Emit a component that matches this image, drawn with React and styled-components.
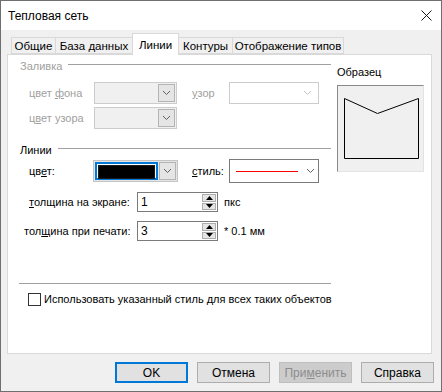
import React, { useState } from 'react';
import styled, { createGlobalStyle } from 'styled-components';

const GlobalStyle = createGlobalStyle`
  html, body { margin: 0; padding: 0; background: #ffffff; }
  * { box-sizing: border-box; }
`;

const Window = styled.div`
  width: 442px;
  height: 392px;
  border: 1px solid #6f6f6f;
  display: flex;
  flex-direction: column;
  background: #f0f0f0;
  font-family: "Liberation Sans", Arial, sans-serif;
  color: #000;
`;

const TitleBar = styled.div`
  height: 29px;
  background: #ffffff;
  display: flex;
  align-items: center;
  justify-content: space-between;
  padding: 0 9px 0 7px;
  font-size: 12px;
`;

const TabStrip = styled.div`
  height: 24px;
  display: flex;
  align-items: flex-end;
  padding-left: 10px;
  position: relative;
  z-index: 1;
`;

const Tab = styled.div`
  width: ${p => p.$w}px;
  height: ${p => (p.$active ? 22 : 17)}px;
  margin-left: -1px;
  margin-bottom: ${p => (p.$active ? -1 : 0)}px;
  border: 1px solid #d9d9d9;
  border-bottom: ${p => (p.$active ? 'none' : '1px solid #d9d9d9')};
  background: ${p => (p.$active ? '#ffffff' : '#f0f0f0')};
  font-size: 11.5px;
  white-space: nowrap;
  display: flex;
  align-items: center;
  justify-content: center;
  padding-top: ${p => (p.$active ? 0 : 1)}px;
  z-index: ${p => (p.$active ? 2 : 0)};
  cursor: default;
  &:first-child { margin-left: 0; }
`;

const Panel = styled.div`
  height: 300px;
  margin: 0 9px 0 6px;
  border: 1px solid #d9d9d9;
  background: #ffffff;
  padding: 4px 0 0 12px;
  display: grid;
  grid-template-columns: 311px 86px;
  column-gap: 6px;
  align-items: start;
  font-size: 11px;
`;

const LeftCol = styled.div`
  display: flex;
  flex-direction: column;
`;

const GroupHeader = styled.div`
  height: 14px;
  margin-top: ${p => p.$mt || 0}px;
  display: flex;
  align-items: center;
  gap: 6px;
  color: ${p => (p.$disabled ? '#a0a0a0' : '#000')};
  font-size: 11px;
  &::after {
    content: '';
    flex: 1;
    height: 1px;
    margin-top: -3px;
    background: #a0a0a0;
  }
`;

const FieldRow = styled.div`
  display: flex;
  align-items: center;
  height: ${p => p.$h || 22}px;
  margin-top: ${p => p.$mt || 0}px;
  padding-left: ${p => p.$pl ?? 9}px;
`;

const Label = styled.span`
  width: ${p => p.$w}px;
  flex: none;
  color: ${p => (p.$disabled ? '#a0a0a0' : '#000')};
  white-space: nowrap;
  u { text-decoration: underline; text-underline-offset: 1px; }
`;

const Spacer = styled.span`
  width: ${p => p.$w}px;
  flex: none;
`;

const Combo = styled.div`
  width: ${p => p.$w}px;
  height: ${p => p.$h || 22}px;
  flex: none;
  display: flex;
  border: 1px solid ${p => p.$border || '#cccccc'};
  background: ${p => p.$bg || '#f0f0f0'};
  padding: 1px;
`;

const ComboValue = styled.div`
  flex: 1;
  display: flex;
  align-items: center;
  padding: 0 5px;
`;

const Swatch = styled.div`
  flex: 1;
  border: 2px solid #0078d7;
  padding: 1px;
  background: #ffffff;
  margin-right: 1px;
  &::before {
    content: '';
    display: block;
    height: 100%;
    background: #000000;
    border: 1px solid #1a1a1a;
  }
`;

const DropButton = styled.div`
  width: ${p => (p.$plain ? 20 : 17)}px;
  display: flex;
  align-items: center;
  justify-content: center;
  background: ${p => (p.$plain ? 'transparent' : '#e5e5e5')};
  border: ${p => (p.$plain ? 'none' : '1px solid #b4b4b4')};
`;

const Chevron = ({ color = '#606060' }) => (
  <svg width="9" height="6" viewBox="0 0 9 6">
    <polyline points="1,1 4.5,4.5 8,1" fill="none" stroke={color} strokeWidth="1" />
  </svg>
);

const LineSample = styled.div`
  width: 62px;
  height: 1px;
  background: #ff0000;
`;

const SpinBox = styled.div`
  width: 81px;
  height: 20px;
  flex: none;
  display: flex;
  border: 1px solid #7a7a7a;
  background: #ffffff;
`;

const SpinText = styled.div`
  flex: 1;
  padding-left: 3px;
  font-size: 12px;
  display: flex;
  align-items: center;
`;

const SpinButtons = styled.div`
  width: 15px;
  display: flex;
  flex-direction: column;
  padding: 1px 1px 1px 0;
  gap: 1px;
`;

const SpinButton = styled.div`
  flex: 1;
  background: #e5e5e5;
  border: 1px solid #adadad;
  display: flex;
  align-items: center;
  justify-content: center;
`;

const Unit = styled.span`
  margin-left: 6px;
  white-space: nowrap;
`;

const Separator = styled.div`
  height: 1px;
  margin: 42px 0 0 -1px;
  width: 312px;
  background: #a0a0a0;
`;

const CheckRow = styled.label`
  display: flex;
  align-items: center;
  gap: 3px;
  margin-top: 8px;
  padding-left: 8px;
  height: 14px;
  font-size: 11px;
  white-space: nowrap;
`;

const CheckBox = styled.span`
  width: 13px;
  height: 13px;
  flex: none;
  border: 1px solid #333333;
  background: #ffffff;
`;

const RightCol = styled.div`
  display: flex;
  flex-direction: column;
`;

const SampleLabel = styled.div`
  margin-top: 7px;
  height: 16px;
  font-size: 11px;
`;

const SampleBox = styled.div`
  width: 87px;
  height: 87px;
  margin-top: 3px;
  border-top: 1px solid #8a8a8a;
  border-left: 1px solid #8a8a8a;
  border-right: 1px solid #e3e3e3;
  border-bottom: 1px solid #e3e3e3;
  background: #f0f0f0;
`;

const ButtonRow = styled.div`
  display: flex;
  justify-content: flex-end;
  gap: 9px;
  margin-top: 8px;
  padding-right: 7px;
`;

const DlgButton = styled.button`
  width: 73px;
  height: 21px;
  padding: 0;
  font-family: "Liberation Sans", Arial, sans-serif;
  font-size: 12px;
  color: ${p => (p.disabled ? '#8c8c8c' : '#000')};
  background: ${p => (p.disabled ? '#cccccc' : '#e1e1e1')};
  border: ${p => (p.$default ? '2px solid #0078d7' : p.disabled ? '1px solid #bfbfbf' : '1px solid #adadad')};
  u { text-decoration: underline; }
`;

const tabs = [
  { name: 'Общие', w: 45 },
  { name: 'База данных', w: 78 },
  { name: 'Линии', w: 47 },
  { name: 'Контуры', w: 55 },
  { name: 'Отображение типов', w: 112 },
];

export default function App() {
  const [active, setActive] = useState(2);

  return (
    <>
      <GlobalStyle />
      <Window>
        <TitleBar>
          <span>Тепловая сеть</span>
          <svg width="11" height="11" viewBox="0 0 11 11">
            <path d="M0.5 0.5 L10.5 10.5 M10.5 0.5 L0.5 10.5" stroke="#1a1a1a" strokeWidth="1" />
          </svg>
        </TitleBar>

        <TabStrip>
          {tabs.map((t, i) => (
            <Tab key={t.name} $w={t.w} $active={i === active} onClick={() => setActive(i)}>
              {t.name}
            </Tab>
          ))}
        </TabStrip>

        <Panel>
          <LeftCol>
            <GroupHeader $disabled>Заливка</GroupHeader>
            <FieldRow $mt={9}>
              <Label $w={65} $disabled>цвет <u>ф</u>она</Label>
              <Combo $w={83}>
                <ComboValue />
                <DropButton><Chevron /></DropButton>
              </Combo>
              <Spacer $w={15} />
              <Label $w={37} $disabled><u>у</u>зор</Label>
              <Combo $w={90} $bg="#ffffff">
                <ComboValue />
                <DropButton $plain><Chevron color="#c4c4c4" /></DropButton>
              </Combo>
            </FieldRow>
            <FieldRow $mt={3}>
              <Label $w={65} $disabled>ц<u>в</u>ет узора</Label>
              <Combo $w={83}>
                <ComboValue />
                <DropButton><Chevron /></DropButton>
              </Combo>
            </FieldRow>

            <GroupHeader $mt={14}>Линии</GroupHeader>
            <FieldRow $mt={3}>
              <Label $w={64}>цв<u>е</u>т:</Label>
              <Combo $w={85} $border="#c4c4c4" $bg="#e5e5e5">
                <Swatch />
                <DropButton><Chevron /></DropButton>
              </Combo>
              <Spacer $w={14} />
              <Label $w={37}><u>с</u>тиль:</Label>
              <Combo $w={90} $h={24} $border="#7a7a7a" $bg="#ffffff">
                <ComboValue><LineSample /></ComboValue>
                <DropButton $plain><Chevron /></DropButton>
              </Combo>
            </FieldRow>
            <FieldRow $mt={10} $h={20}>
              <Label $w={108}><u>т</u>олщина на экране:</Label>
              <SpinBox>
                <SpinText>1</SpinText>
                <SpinButtons>
                  <SpinButton>
                    <svg width="7" height="4" viewBox="0 0 7 4"><polygon points="0,4 3.5,0 7,4" fill="#000" /></svg>
                  </SpinButton>
                  <SpinButton>
                    <svg width="7" height="4" viewBox="0 0 7 4"><polygon points="0,0 3.5,4 7,0" fill="#000" /></svg>
                  </SpinButton>
                </SpinButtons>
              </SpinBox>
              <Unit>пкс</Unit>
            </FieldRow>
            <FieldRow $mt={9} $h={20} $pl={4}>
              <Label $w={113}>тол<u>щ</u>ина при печати:</Label>
              <SpinBox>
                <SpinText>3</SpinText>
                <SpinButtons>
                  <SpinButton>
                    <svg width="7" height="4" viewBox="0 0 7 4"><polygon points="0,4 3.5,0 7,4" fill="#000" /></svg>
                  </SpinButton>
                  <SpinButton>
                    <svg width="7" height="4" viewBox="0 0 7 4"><polygon points="0,0 3.5,4 7,0" fill="#000" /></svg>
                  </SpinButton>
                </SpinButtons>
              </SpinBox>
              <Unit>* 0.1 мм</Unit>
            </FieldRow>

            <Separator />
            <CheckRow>
              <CheckBox />
              Использовать указанный стиль для всех таких объектов
            </CheckRow>
          </LeftCol>

          <RightCol>
            <SampleLabel>Образец</SampleLabel>
            <SampleBox>
              <svg width="85" height="85" viewBox="0 0 85 85">
                <path d="M6.5 12.5 L39.5 27.5 L80.5 12.5 L80.5 72.5 L6.5 72.5 Z" fill="none" stroke="#000" strokeWidth="1" />
              </svg>
            </SampleBox>
          </RightCol>
        </Panel>

        <ButtonRow>
          <DlgButton $default>OK</DlgButton>
          <DlgButton>Отмена</DlgButton>
          <DlgButton disabled>При<u>м</u>енить</DlgButton>
          <DlgButton>Справка</DlgButton>
        </ButtonRow>
      </Window>
    </>
  );
}
